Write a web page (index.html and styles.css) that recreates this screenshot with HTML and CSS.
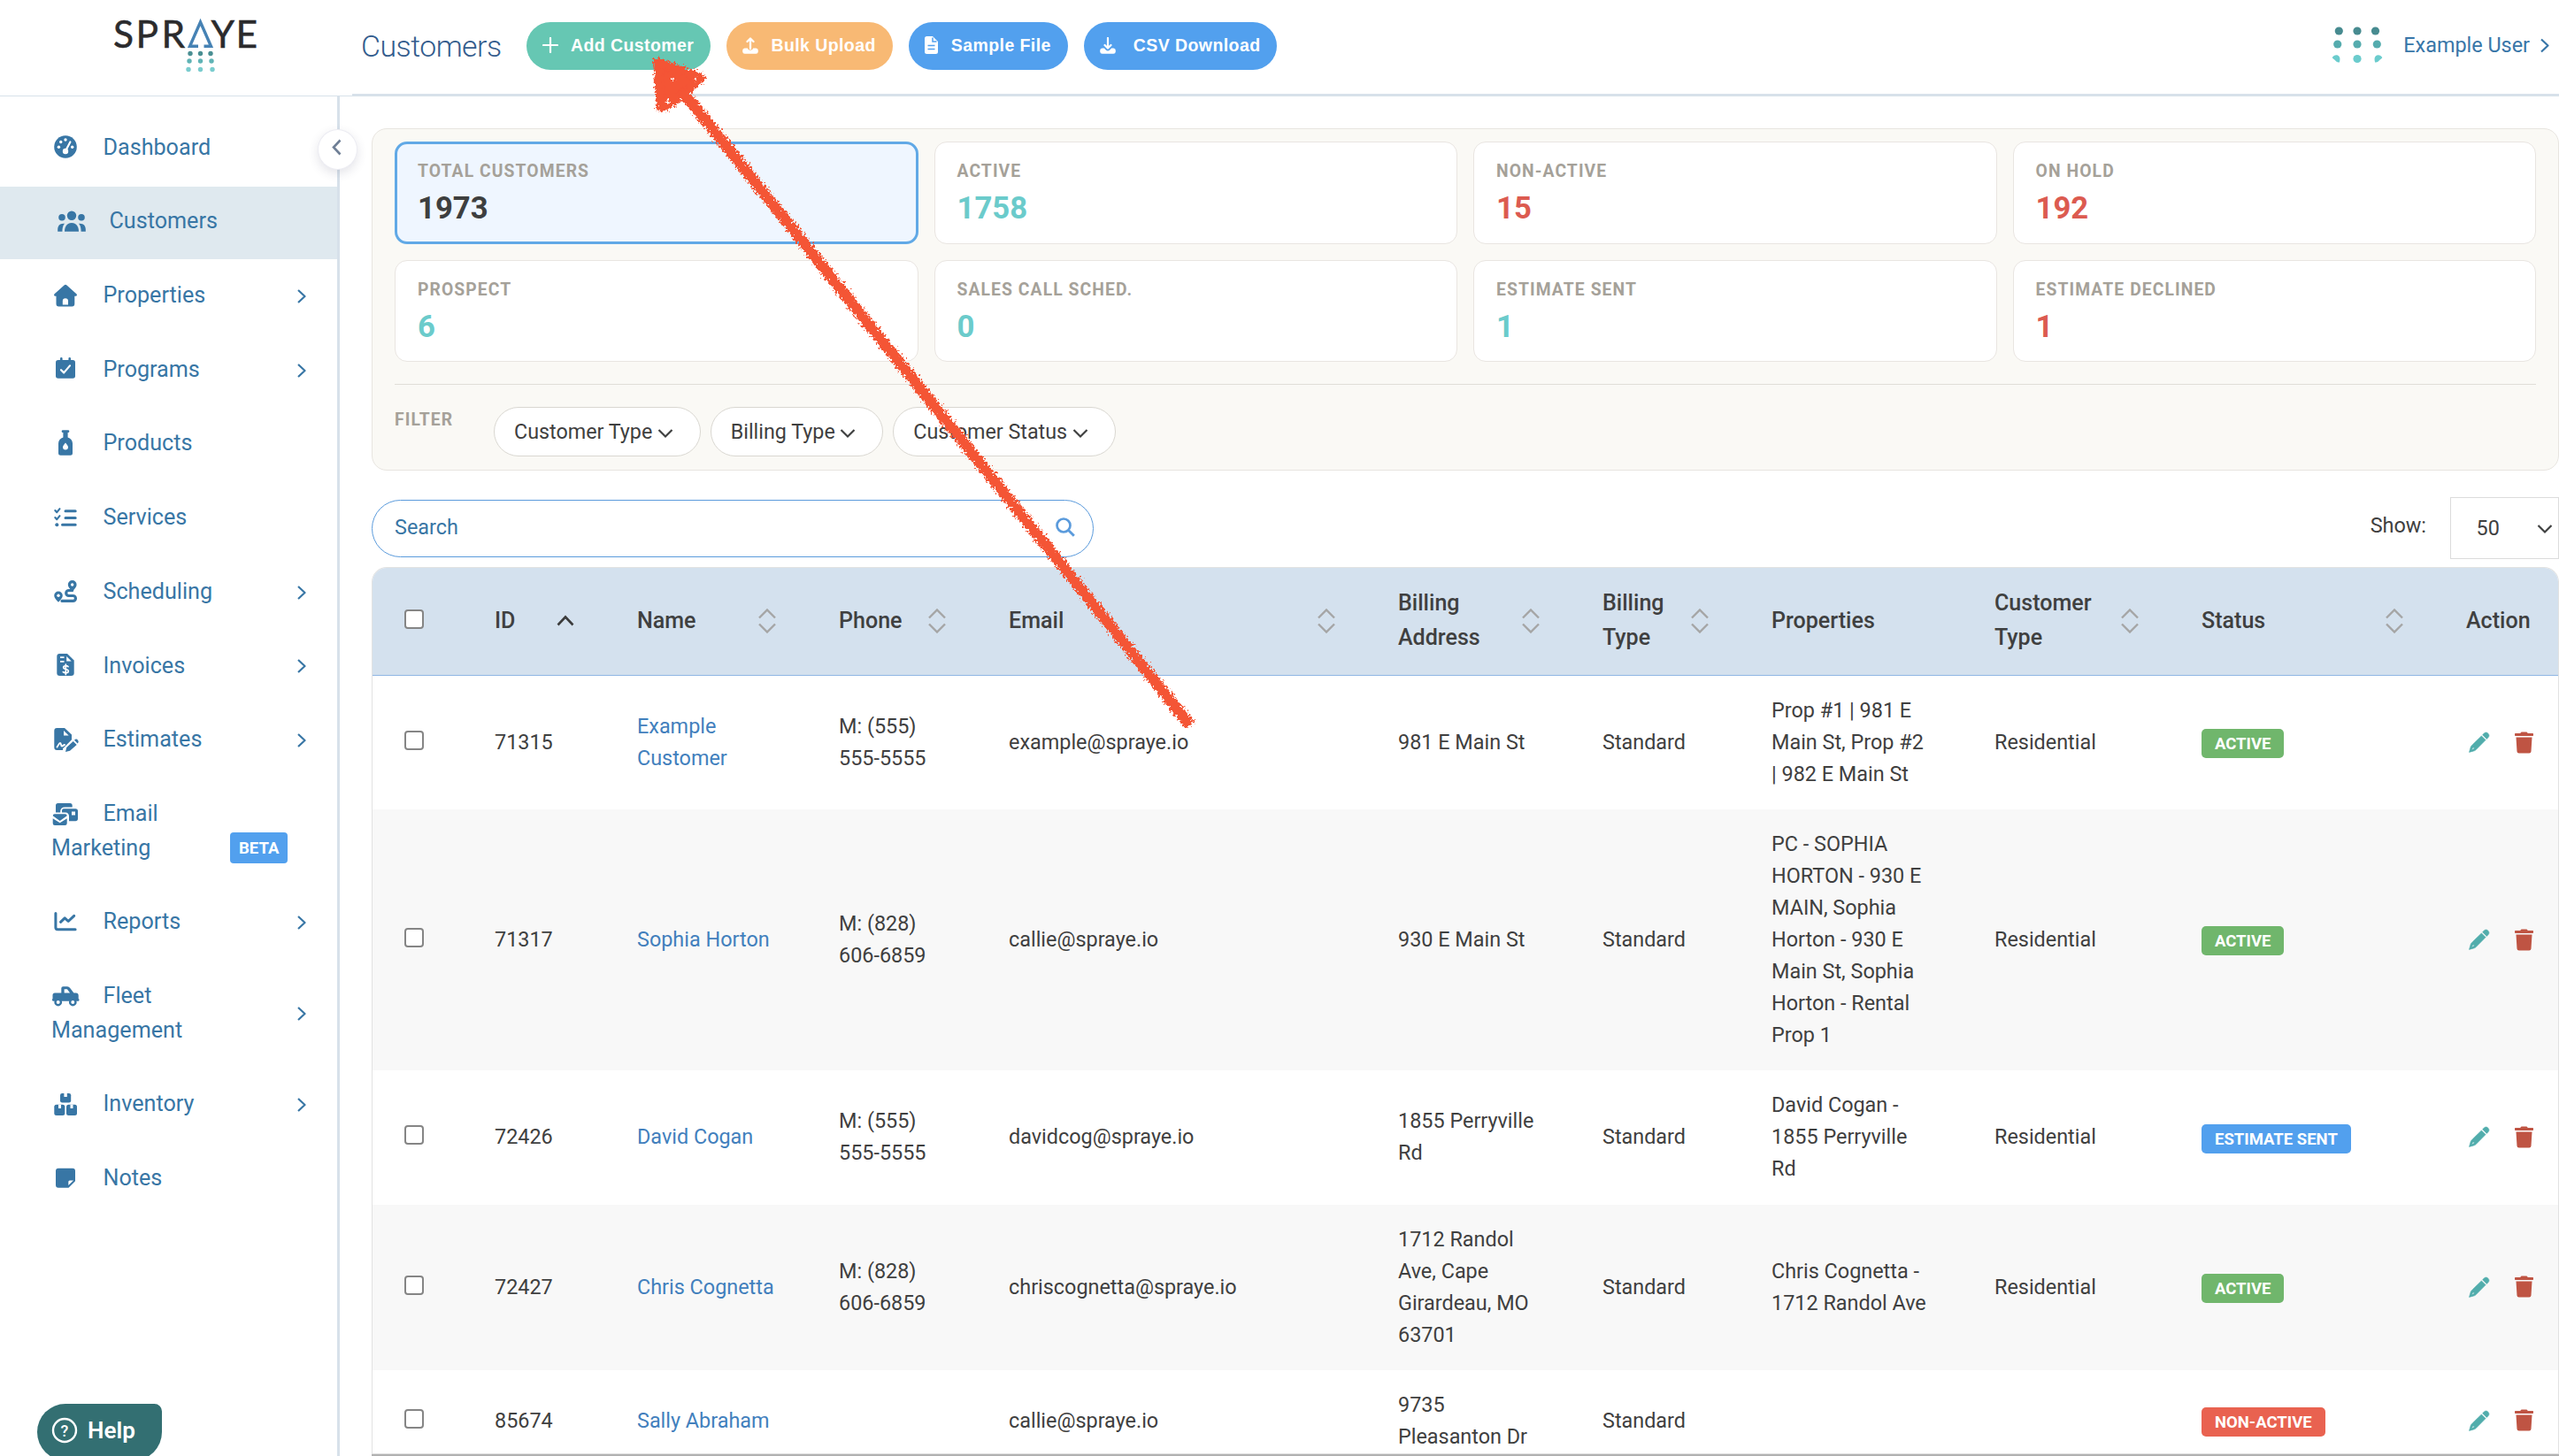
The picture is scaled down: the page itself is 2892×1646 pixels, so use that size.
FILE: index.html
```html
<!DOCTYPE html>
<html lang="en">
<head>
  <meta charset="UTF-8">
  <meta name="viewport" content="width=device-width, initial-scale=1.0">
  <title>Customers</title>
  <link rel="stylesheet" href="styles.css">
</head>
<body>
  <!-- icon sprite -->
  <svg class="sprite" width="0" height="0">
    <symbol id="i-gauge" viewBox="0 0 34 34"><circle cx="17" cy="17" r="12.8"/><g fill="#fff"><circle cx="9.4" cy="17.3" r="1.7"/><circle cx="11.7" cy="11.5" r="1.7"/><circle cx="17" cy="9" r="1.7"/><circle cx="24.7" cy="17.3" r="1.7"/><circle cx="17" cy="22" r="3.2"/></g><path d="M22.4 11.4L17.4 21" stroke="#fff" stroke-width="2.2" stroke-linecap="round"/></symbol>
    <symbol id="i-users" viewBox="0 0 34 34"><circle cx="17" cy="10.8" r="5.2"/><circle cx="6" cy="12.8" r="3.8"/><circle cx="28" cy="12.8" r="3.8"/><path d="M9 28.8c0-6 3.2-9.9 8-9.9s8 3.9 8 9.9zM1.2 28.8v-2.5c0-4.4 2.8-6.9 7.8-6.5-1.9 2.2-2.6 5-2.6 9zM32.8 28.8v-2.5c0-4.4-2.8-6.9-7.8-6.5 1.9 2.2 2.6 5 2.6 9z"/></symbol>
    <symbol id="i-house" viewBox="0 0 34 34"><path d="M15.8 5.3a1.8 1.8 0 0 1 2.4 0l11.2 10c1 1 .5 2.5-.8 2.5h-1.3v8.7a3 3 0 0 1-3 3H9.5a3 3 0 0 1-3-3v-8.7H5.4c-1.3 0-1.8-1.5-.8-2.5z"/><path d="M13.8 27.5v-4.2a3.1 3.1 0 0 1 6.2 0v4.2z" fill="#fff"/></symbol>
    <symbol id="i-calendar" viewBox="0 0 34 34"><rect x="6" y="7" width="22" height="20.8" rx="2.8"/><path d="M12.3 5.2v4M21.7 5.2v4" stroke="currentColor" stroke-width="2.6" stroke-linecap="round"/><path d="M12 18.2l3.2 3.2 6.8-8" fill="none" stroke="#fff" stroke-width="2.2" stroke-linecap="round" stroke-linejoin="round"/></symbol>
    <symbol id="i-bottle" viewBox="0 0 34 34"><path d="M14 2.3h6a1.3 1.3 0 0 1 0 2.7h-.4v5.5c3.2 1 5.4 3.6 5.4 6.8v11a2.5 2.5 0 0 1-2.5 2.5h-11A2.5 2.5 0 0 1 9 28.3v-11c0-3.2 2.2-5.8 5.4-6.8V5H14a1.3 1.3 0 0 1 0-2.7z"/><path d="M17 16.5c1.6 2 3 3.6 3 5a3 3 0 0 1-6 0c0-1.4 1.4-3 3-5z" fill="#fff"/></symbol>
    <symbol id="i-tasks" viewBox="0 0 34 34"><g fill="none" stroke="currentColor" stroke-linecap="round" stroke-linejoin="round"><path d="M17 9.7h11.2M17 17.4h11.2M13.5 25.3h14.7" stroke-width="3"/><path d="M5.3 9l2 2.2 3.2-4M5.3 17l2 2.2 3.2-4" stroke-width="2.1"/></g><circle cx="7.3" cy="25.3" r="2"/></symbol>
    <symbol id="i-route" viewBox="0 0 34 34"><path d="M24.7 16.5h-4a3 3 0 0 0 0 6h4.8a2.9 2.9 0 0 1 0 5.9H13" fill="none" stroke="currentColor" stroke-width="3.2" stroke-linecap="round"/><path d="M24.7 5a4.9 4.9 0 0 1 4.9 4.9c0 2.3-2 4.8-4.9 7.6-2.9-2.8-4.9-5.3-4.9-7.6A4.9 4.9 0 0 1 24.7 5zM9 17.5a4.8 4.8 0 0 1 4.8 4.8c0 2.3-2 4.7-4.8 7.5-2.8-2.8-4.8-5.2-4.8-7.5A4.8 4.8 0 0 1 9 17.5z"/><circle cx="24.7" cy="10" r="1.7" fill="#fff"/><circle cx="9" cy="22.3" r="1.7" fill="#fff"/></symbol>
    <symbol id="i-invoice" viewBox="0 0 34 34"><path d="M10.3 4H19l7.7 7.5V26a3 3 0 0 1-3 3H10.3a3 3 0 0 1-3-3V7a3 3 0 0 1 3-3z"/><path d="M18.2 7v5.5h5.5zM11 7.2h4.5v1.7H11zM11 12h4.5v1.7H11z" fill="#fff"/><path d="M20 18.6c-1.5-1.3-5.3-1.3-5.3.9 0 2.5 5.6 1.5 5.6 4.2 0 2.4-4.3 2.4-6 .9M17.3 16v11.5" fill="none" stroke="#fff" stroke-width="1.7" stroke-linecap="round"/></symbol>
    <symbol id="i-contract" viewBox="0 0 34 34"><path d="M7.3 4H16l8 7.5v5.7L14 27.2v1.7H7.3a3 3 0 0 1-3-3V7a3 3 0 0 1 3-3z"/><path d="M15 7v5.5h5.7z" fill="#fff"/><path d="M7.5 25.5c1.5-1.5 2-4.5 3.5-4.5s.5 3.5 2 3.5 1.500-1.500 3-1.500" fill="none" stroke="#fff" stroke-width="1.8" stroke-linecap="round"/><path d="M17 31l1.200-5 7.500-7 4 4-7.700 6.800zM27 17.700c1.300-1.500 3-1.400 4 0 1 1.200.9 2.600-.3 3.800z"/></symbol>
    <symbol id="i-mails" viewBox="0 0 34 34"><path d="M8.5 5h13.5a2.7 2.7 0 0 1 2.7 2.7v1.8h-8.5c-3 0-5 1.8-5 4.5v1.5H6V7.5A2.5 2.5 0 0 1 8.5 5z"/><path d="M15 11.3h13.3a2.7 2.7 0 0 1 2.7 2.7v8.6a2.7 2.7 0 0 1-2.7 2.7H21v-5.6c0-2.5-1.5-4.2-4-4.2h-4v-1.5c0-1.7.5-2.7 2-2.7z"/><path d="M24 14.5h4v4h-4z" fill="#fff"/><path d="M4.7 17.3h12a2 2 0 0 1 2 2l-8 5.7-8-5.7a2 2 0 0 1 2-2zM2.7 22.3l8 5 8-5v5.4a2.3 2.3 0 0 1-2.3 2.3H5a2.3 2.3 0 0 1-2.3-2.3z"/></symbol>
    <symbol id="i-chart" viewBox="0 0 34 34"><path d="M5.9 7.5V23.5a2.2 2.2 0 0 0 2.2 2.2h20M11.5 17.3l4.7-4.5 4 3.7 6.5-6.2" fill="none" stroke="currentColor" stroke-width="3" stroke-linecap="round" stroke-linejoin="round"/></symbol>
    <symbol id="i-truck" viewBox="0 0 34 34"><path d="M14.3 6.3H19a4 4 0 0 1 3.2 1.6l4.2 5.7h2.3a3 3 0 0 1 3 3v3.5a1.5 1.5 0 0 1 0 2.7H3a1.5 1.5 0 0 1-.5-2.7v-4a2.5 2.5 0 0 1 2.5-2.5h7.3V8.3a2 2 0 0 1 2-2z"/><path d="M15.6 9.3h3.3l3.2 4.3h-6.5z" fill="#fff"/><circle cx="8.7" cy="24" r="3.2" fill="#fff" stroke="currentColor" stroke-width="2.4"/><circle cx="25.3" cy="24" r="3.2" fill="#fff" stroke="currentColor" stroke-width="2.4"/></symbol>
    <symbol id="i-boxes" viewBox="0 0 34 34"><rect x="11" y="5" width="12.2" height="10.4" rx="2.2"/><rect x="4.3" y="17.7" width="12" height="12.4" rx="2.5"/><rect x="18" y="17.7" width="12" height="12.4" rx="2.5"/><path d="M15.4 5h3.4v4h-3.4zM9 17.7h3v4.2H9zM22.5 17.7h3v4.2h-3z" fill="#fff"/></symbol>
    <symbol id="i-note" viewBox="0 0 34 34"><path d="M9 5.7h16a3 3 0 0 1 3 3v11.5l-7.5 7.5H9a3 3 0 0 1-3-3v-16a3 3 0 0 1 3-3z"/><path d="M20.3 25v-4a1.5 1.5 0 0 1 1.5-1.5H26z" fill="#fff"/></symbol>
    <symbol id="i-right" viewBox="0 0 10 16"><path d="M1 1l7.5 7L1 15" fill="none" stroke="currentColor" stroke-width="2.2" stroke-linejoin="round"/></symbol>
    <symbol id="i-down" viewBox="0 0 18 12"><path d="M1.5 2L9 9.5 16.5 2" fill="none" stroke="currentColor" stroke-width="2.2"/></symbol>
    <symbol id="i-sort" viewBox="0 0 20 28"><path d="M1 10.5L10 1.5l9 9M1 17.5l9 9 9-9" fill="none" stroke="#a5a5a5" stroke-width="2.4"/></symbol>
    <symbol id="i-pencil" viewBox="0 0 24 24"><path d="M17.3 2.1c1.5-1.5 3.2-1.3 4.6.1 1.3 1.4 1.5 3 .1 4.5l-1.7 1.7-4.7-4.7zM14.4 4.9l4.7 4.7L8 20.8c-.5.5-1 .8-1.7 1L.5 23.4l1.7-5.8c.2-.7.5-1.2 1-1.7zM4.6 18.2l-1.2 2.4 2.3-.8.6-1.8z" fill-rule="evenodd" stroke="currentColor" stroke-width=".6"/></symbol>
    <symbol id="i-trash" viewBox="0 0 448 512"><path d="M432 32H312l-9.4-18.7A24 24 0 0 0 281.1 0H166.8a23.72 23.72 0 0 0-21.4 13.3L136 32H16A16 16 0 0 0 0 48v32a16 16 0 0 0 16 16h416a16 16 0 0 0 16-16V48a16 16 0 0 0-16-16zM53.2 467a48 48 0 0 0 47.9 45h245.8a48 48 0 0 0 47.9-45L416 128H32z"/></symbol>
  </svg>

  <header class="topbar">
    <div class="brand">
      <svg class="logo" viewBox="0 0 164 62" width="164" height="62">
        <g class="logo-text"><text x="-1" y="32">S</text><text x="24.5" y="32">P</text><text x="53.5" y="32">R</text><text x="109.5" y="32">Y</text><text x="137.5" y="32">E</text></g>
        <path d="M95 30.3H85.5L97.5 3l12 27.3H101.5" fill="none" stroke="#4682b4" stroke-width="3.4"/>
        <g fill="#4a8f93"><circle cx="86" cy="38.5" r="2.7"/><circle cx="97.5" cy="38.5" r="2.7"/><circle cx="109" cy="38.5" r="2.7"/></g>
        <g fill="#5fb3b5"><circle cx="85" cy="47" r="2.7"/><circle cx="97.5" cy="47" r="2.7"/><circle cx="110" cy="47" r="2.7"/></g>
        <g fill="#7accce"><circle cx="84" cy="56.5" r="2.7"/><circle cx="97.5" cy="56.5" r="2.7"/><circle cx="111" cy="56.5" r="2.7"/></g>
      </svg>
    </div>
    <div class="topbar-main">
      <h1 class="page-title">Customers</h1>
      <div class="actions">
        <button class="btn btn-green"><svg width="18" height="18" viewBox="0 0 18 18"><path d="M9 1v16M1 9h16" stroke="#fff" stroke-width="2.2" stroke-linecap="round"/></svg>Add Customer</button>
        <button class="btn btn-orange"><svg width="18" height="19" viewBox="0 0 18 19"><path d="M9 13V2M5.5 5L9 1.5 12.5 5" fill="none" stroke="#fff" stroke-width="2.3" stroke-linecap="round" stroke-linejoin="round"/><path d="M2.5 12.5H6c.5 3 5.5 3 6 0h3.5a2.5 2.5 0 0 1 2.3 2.5v1.5a2.5 2.5 0 0 1-2.5 2.3H2.7A2.5 2.5 0 0 1 .2 16.5V15a2.5 2.5 0 0 1 2.3-2.5z" fill="#fff"/></svg>Bulk Upload</button>
        <button class="btn btn-blue btn-sample"><svg width="15" height="20" viewBox="0 0 15 20"><path d="M2.5 0H9l6 6v11.5a2.5 2.5 0 0 1-2.5 2.5h-10A2.5 2.5 0 0 1 0 17.5v-15A2.5 2.5 0 0 1 2.5 0z" fill="#fff"/><path d="M9 1.5V6h4.5M3.5 10.5h8M3.5 14.5h8" fill="none" stroke="#52a0ee" stroke-width="1.5"/></svg>Sample File</button>
        <button class="btn btn-blue btn-csv"><svg width="18" height="19" viewBox="0 0 18 19"><path d="M2.5 12.5H5c1 1.5 2.5 3 4 3s3-1.5 4-3h2.5a2.5 2.5 0 0 1 2.3 2.5v1.5a2.5 2.5 0 0 1-2.5 2.3H2.7A2.5 2.5 0 0 1 .2 16.5V15a2.5 2.5 0 0 1 2.3-2.5z" fill="#fff"/><path d="M9 1v11M5.5 9L9 12.5 12.5 9" fill="none" stroke="#fff" stroke-width="2.2" stroke-linecap="round" stroke-linejoin="round"/></svg>CSV Download</button>
      </div>
      <div class="user">
        <svg class="apps" width="58" height="42" viewBox="0 0 58 42">
          <g fill="#478b90"><circle cx="8.3" cy="5" r="4.6"/><circle cx="29" cy="5" r="4.6"/><circle cx="49.5" cy="5" r="4.6"/></g>
          <g fill="#55acae"><circle cx="6.7" cy="20" r="4.6"/><circle cx="29" cy="20" r="4.6"/><circle cx="51.3" cy="20" r="4.6"/></g>
          <g fill="#6bcccd"><path d="M.7 35c1.5-3 5.5-3.8 7.6-1.6 1.6 1.7 1.3 4.2.6 7-1.9.5-3.4-.5-4.6-1.9C3 37 1.4 36.7.7 35z"/><circle cx="29" cy="36.5" r="4.6"/><path d="M57.3 35c-1.5-3-5.5-3.8-7.6-1.6-1.6 1.7-1.3 4.2-.6 7 1.9.5 3.4-.5 4.6-1.9 1.3-1.5 2.9-1.8 3.6-3.5z"/></g>
        </svg>
        <span>Example User</span>
        <svg class="chev" width="10" height="17"><use href="#i-right"/></svg>
      </div>
    </div>
  </header>

  <div class="layout">
    <nav class="sidebar">
      <a class="nav-item"><span class="nav-label"><svg class="ico"><use href="#i-gauge"/></svg>Dashboard</span></a>
      <a class="nav-item active"><span class="nav-label"><svg class="ico"><use href="#i-users"/></svg>Customers</span></a>
      <a class="nav-item"><span class="nav-label"><svg class="ico"><use href="#i-house"/></svg>Properties</span><svg class="chev"><use href="#i-right"/></svg></a>
      <a class="nav-item"><span class="nav-label"><svg class="ico"><use href="#i-calendar"/></svg>Programs</span><svg class="chev"><use href="#i-right"/></svg></a>
      <a class="nav-item"><span class="nav-label"><svg class="ico"><use href="#i-bottle"/></svg>Products</span></a>
      <a class="nav-item"><span class="nav-label"><svg class="ico"><use href="#i-tasks"/></svg>Services</span></a>
      <a class="nav-item"><span class="nav-label"><svg class="ico"><use href="#i-route"/></svg>Scheduling</span><svg class="chev"><use href="#i-right"/></svg></a>
      <a class="nav-item"><span class="nav-label"><svg class="ico"><use href="#i-invoice"/></svg>Invoices</span><svg class="chev"><use href="#i-right"/></svg></a>
      <a class="nav-item"><span class="nav-label"><svg class="ico"><use href="#i-contract"/></svg>Estimates</span><svg class="chev"><use href="#i-right"/></svg></a>
      <a class="nav-item nav-email"><span class="nav-label"><svg class="ico"><use href="#i-mails"/></svg>Email Marketing</span><span class="beta">BETA</span></a>
      <a class="nav-item"><span class="nav-label"><svg class="ico"><use href="#i-chart"/></svg>Reports</span><svg class="chev"><use href="#i-right"/></svg></a>
      <a class="nav-item"><span class="nav-label"><svg class="ico"><use href="#i-truck"/></svg>Fleet Management</span><svg class="chev"><use href="#i-right"/></svg></a>
      <a class="nav-item"><span class="nav-label"><svg class="ico"><use href="#i-boxes"/></svg>Inventory</span><svg class="chev"><use href="#i-right"/></svg></a>
      <a class="nav-item"><span class="nav-label"><svg class="ico"><use href="#i-note"/></svg>Notes</span></a>
      <button class="collapse"><svg width="11" height="19" viewBox="0 0 11 19"><path d="M9.5 1.5L2 9.5l7.5 8" fill="none" stroke="#6f7f96" stroke-width="2.6"/></svg></button>
    </nav>

    <main class="content">
      <section class="panel">
        <div class="stats">
          <div class="stat selected"><div class="stat-label">TOTAL CUSTOMERS</div><div class="stat-value">1973</div></div>
          <div class="stat"><div class="stat-label">ACTIVE</div><div class="stat-value teal">1758</div></div>
          <div class="stat"><div class="stat-label">NON-ACTIVE</div><div class="stat-value red">15</div></div>
          <div class="stat"><div class="stat-label">ON HOLD</div><div class="stat-value red">192</div></div>
          <div class="stat"><div class="stat-label">PROSPECT</div><div class="stat-value teal">6</div></div>
          <div class="stat"><div class="stat-label">SALES CALL SCHED.</div><div class="stat-value teal">0</div></div>
          <div class="stat"><div class="stat-label">ESTIMATE SENT</div><div class="stat-value teal">1</div></div>
          <div class="stat"><div class="stat-label">ESTIMATE DECLINED</div><div class="stat-value red">1</div></div>
        </div>
        <div class="filters">
          <span class="filter-label">FILTER</span>
          <button class="pill">Customer Type<svg width="18" height="12"><use href="#i-down"/></svg></button>
          <button class="pill">Billing Type<svg width="18" height="12"><use href="#i-down"/></svg></button>
          <button class="pill">Customer Status<svg width="18" height="12"><use href="#i-down"/></svg></button>
        </div>
      </section>

      <div class="tools">
        <div class="search"><span>Search</span><svg width="22" height="22" viewBox="0 0 22 22"><circle cx="9" cy="9" r="7.5" fill="none" stroke="#5b9bdc" stroke-width="2.7"/><path d="M14.5 14.5l6.3 6.3" stroke="#5b9bdc" stroke-width="2.9"/></svg></div>
        <div class="show"><span>Show:</span><div class="select"><span>50</span><svg width="18" height="12"><use href="#i-down"/></svg></div></div>
      </div>

      <div class="table-wrap">
        <table class="customers">
          <colgroup>
            <col class="c-check"><col class="c-id"><col class="c-name"><col class="c-phone"><col class="c-email"><col class="c-addr"><col class="c-btype"><col class="c-props"><col class="c-ctype"><col class="c-status"><col class="c-action">
          </colgroup>
          <thead>
            <tr>
              <th><span class="check"></span></th>
              <th><div class="th">ID<svg width="20" height="28" viewBox="0 0 20 28"><path d="M1.5 18.5l8.5-9 8.5 9" fill="none" stroke="#3c3c3c" stroke-width="2.6"/></svg></div></th>
              <th><div class="th">Name<svg width="20" height="28"><use href="#i-sort"/></svg></div></th>
              <th><div class="th">Phone<svg width="20" height="28"><use href="#i-sort"/></svg></div></th>
              <th><div class="th">Email<svg width="20" height="28"><use href="#i-sort"/></svg></div></th>
              <th><div class="th"><span>Billing<br>Address</span><svg width="20" height="28"><use href="#i-sort"/></svg></div></th>
              <th><div class="th"><span>Billing<br>Type</span><svg width="20" height="28"><use href="#i-sort"/></svg></div></th>
              <th>Properties</th>
              <th><div class="th"><span>Customer<br>Type</span><svg width="20" height="28"><use href="#i-sort"/></svg></div></th>
              <th><div class="th">Status<svg width="20" height="28"><use href="#i-sort"/></svg></div></th>
              <th>Action</th>
            </tr>
          </thead>
          <tbody>
            <tr>
              <td><span class="check"></span></td><td>71315</td><td><a>Example Customer</a></td><td>M: (555) 555-5555</td><td>example@spraye.io</td><td>981 E Main St</td><td>Standard</td>
              <td>Prop #1 | 981 E Main St, Prop #2 | 982 E Main St</td><td>Residential</td><td><span class="badge green">ACTIVE</span></td>
              <td><div class="row-actions"><svg class="edit"><use href="#i-pencil"/></svg><svg class="trash"><use href="#i-trash"/></svg></div></td>
            </tr>
            <tr>
              <td><span class="check"></span></td><td>71317</td><td><a>Sophia Horton</a></td><td>M: (828) 606-6859</td><td>callie@spraye.io</td><td>930 E Main St</td><td>Standard</td>
              <td>PC - SOPHIA HORTON - 930 E MAIN, Sophia Horton - 930 E Main St, Sophia Horton - Rental Prop 1</td><td>Residential</td><td><span class="badge green">ACTIVE</span></td>
              <td><div class="row-actions"><svg class="edit"><use href="#i-pencil"/></svg><svg class="trash"><use href="#i-trash"/></svg></div></td>
            </tr>
            <tr>
              <td><span class="check"></span></td><td>72426</td><td><a>David Cogan</a></td><td>M: (555) 555-5555</td><td>davidcog@spraye.io</td><td>1855 Perryville Rd</td><td>Standard</td>
              <td>David Cogan - 1855 Perryville Rd</td><td>Residential</td><td><span class="badge blue">ESTIMATE SENT</span></td>
              <td><div class="row-actions"><svg class="edit"><use href="#i-pencil"/></svg><svg class="trash"><use href="#i-trash"/></svg></div></td>
            </tr>
            <tr>
              <td><span class="check"></span></td><td>72427</td><td class="name"><a>Chris Cognetta</a></td><td>M: (828) 606-6859</td><td>chriscognetta@spraye.io</td><td>1712 Randol Ave, Cape Girardeau, MO 63701</td><td>Standard</td>
              <td>Chris Cognetta - 1712 Randol Ave</td><td>Residential</td><td><span class="badge green">ACTIVE</span></td>
              <td><div class="row-actions"><svg class="edit"><use href="#i-pencil"/></svg><svg class="trash"><use href="#i-trash"/></svg></div></td>
            </tr>
            <tr>
              <td><span class="check"></span></td><td>85674</td><td><a>Sally Abraham</a></td><td></td><td>callie@spraye.io</td><td>9735 Pleasanton Dr</td><td>Standard</td>
              <td></td><td></td><td><span class="badge red">NON-ACTIVE</span></td>
              <td><div class="row-actions"><svg class="edit"><use href="#i-pencil"/></svg><svg class="trash"><use href="#i-trash"/></svg></div></td>
            </tr>
          </tbody>
        </table>
      </div>
    </main>
  </div>

  <div class="scrollbar"></div>

  <button class="help"><svg width="30" height="30" viewBox="0 0 30 30"><circle cx="15" cy="15" r="13" fill="none" stroke="#fff" stroke-width="2.4"/><text x="15" y="21.5" font-size="18" text-anchor="middle" class="help-mark">?</text></svg>Help</button>

  <!-- crayon pointer to the Add Customer button -->
  <svg class="pointer" viewBox="0 0 660 800" width="660" height="800">
    <filter id="crayon" x="-5%" y="-5%" width="110%" height="110%">
      <feTurbulence type="fractalNoise" baseFrequency="0.4" numOctaves="3" seed="4"/>
      <feDisplacementMap in="SourceGraphic" scale="11" xChannelSelector="R" yChannelSelector="G"/>
    </filter>
    <g filter="url(#crayon)" fill="#f45436" stroke="#f45436" stroke-linejoin="round">
      <path d="M39 47l49 18-18 17-22 15-5 1z" stroke-width="10"/>
      <path d="M67 80L641 797" stroke-width="12.5" stroke-linecap="butt"/>
      <path d="M55 65l1 4M50 93l2-3M84 66l-3 1" stroke="#fff" stroke-width="2.5"/>
    </g>
  </svg>
</body>
</html>
```
FILE: styles.css
```css
* {
  box-sizing: border-box;
}

body {
  margin: 0;
  width: 2892px;
  height: 1646px;
  overflow: hidden;
  background: #fff;
  color: #3f4040;
  font-family: Roboto, "Liberation Sans", sans-serif;
  font-size: 23.4px;
}

button {
  font-family: inherit;
  border: none;
  cursor: pointer;
}

svg {
  flex-shrink: 0;
  fill: currentColor;
}

.sprite {
  display: block;
  height: 0;
}

/* top bar */
.topbar {
  display: flex;
  height: 109px;
}

.brand {
  width: 398px;
  padding: 22px 0 0 129px;
  border-bottom: 1px solid #d7e1ea;
}

.logo {
  display: block;
  overflow: visible;
}

.logo-text {
  font-family: Lato, sans-serif;
  font-size: 42.5px;
  font-weight: 400;
  fill: #2b2b2d;
  stroke: #2b2b2d;
  stroke-width: 0.5px;
}

.topbar-main {
  flex: 1;
  display: flex;
  align-items: flex-start;
  border-bottom: 3px solid #d7e1ea;
}

.page-title {
  margin: 0;
  padding: 32px 0 0 10px;
  width: 197px;
  font-size: 33.8px;
  line-height: 42px;
  font-weight: 300;
  letter-spacing: -0.5px;
  color: #335c8d;
}

.actions {
  display: flex;
  gap: 18px;
  padding-top: 25px;
}

.btn {
  display: flex;
  align-items: center;
  height: 54px;
  padding: 0 19px 2px 18px;
  border-radius: 27px;
  color: #fff;
  font-family: "Liberation Sans", Arial, sans-serif;
  font-size: 19.5px;
  font-weight: 700;
  letter-spacing: 0.42px;
  white-space: nowrap;
}

.btn svg {
  margin-right: 14px;
}

.btn-sample svg {
  margin-right: 15px;
}

.btn-csv svg {
  margin-right: 20px;
}

.btn-green { background: #66c7b3; }
.btn-orange { background: #f8b974; }
.btn-blue { background: #52a0ee; }

.user {
  display: flex;
  align-items: center;
  margin-left: auto;
  padding: 30px 11px 0 0;
  color: #3876a8;
}

.user .apps {
  margin-right: 23px;
}

.user .chev {
  margin-left: 12px;
}

/* sidebar */
.layout {
  display: flex;
  height: 1537px;
}

.sidebar {
  position: relative;
  width: 384px;
  padding-top: 17px;
  border-right: 3px solid #d7e1ea;
  color: #3876a5;
  font-size: 25.15px;
  line-height: 38.57px;
}

.nav-item {
  display: flex;
  align-items: center;
  margin-top: 1.77px;
  padding: 19.8px 35px 23.6px 58px;
}

.nav-item.active {
  padding-left: 65px;
  background: #dfe9ef;
}

.nav-label {
  width: 210px;
}

.nav-label .ico {
  width: 34px;
  height: 34px;
  margin: -10px 25.5px -7px -1px;
  vertical-align: -1.5px;
}

.nav-item .chev {
  width: 10px;
  height: 16px;
  margin: 1px 0 0 auto;
}

.nav-email {
  align-items: flex-end;
}

.beta {
  margin: 0 0 2px -8px;
  height: 35px;
  padding: 0 10px;
  border-radius: 4px;
  background: #52a0ee;
  color: #fff;
  font-size: 18.5px;
  line-height: 36px;
  font-weight: 700;
}

.collapse {
  position: absolute;
  top: 37px;
  right: -23px;
  width: 45px;
  height: 46px;
  padding: 0 3px 2px 0;
  border: 1px solid #ececf2;
  border-radius: 50%;
  background: #fff;
  box-shadow: 0 4px 12px rgba(60, 60, 90, 0.14);
}

/* stats + filters */
.content {
  flex: 1;
  padding: 36px 0 0 36px;
}

.panel {
  height: 387px;
  padding: 14px 25px 0;
  border: 1px solid #e8e5e0;
  border-radius: 17px;
  background: #faf9f5;
}

.stats {
  display: grid;
  grid-template-columns: repeat(4, 1fr);
  grid-template-rows: 116px 115px;
  gap: 18px;
}

.stat {
  padding: 22px 25px 0;
  border: 1px solid #e9e5e1;
  border-radius: 14px;
  background: #fff;
}

.stat.selected {
  padding: 20px 23px 0;
  border: 3px solid #61a9e6;
  background: #eff6ff;
}

.stat-label,
.filter-label {
  font-size: 19.3px;
  line-height: 22px;
  font-weight: 700;
  letter-spacing: 1.1px;
  color: #a5a199;
}

.stat-value {
  margin-top: 8.5px;
  font-size: 34.7px;
  line-height: 42px;
  font-weight: 700;
  color: #3e3f3f;
}

.stat-value.teal { color: #6bcbcb; }
.stat-value.red { color: #dc5b50; }

.filters {
  display: flex;
  margin-top: 25px;
  padding-top: 25px;
  border-top: 1px solid #e0ded8;
}

.filter-label {
  width: 112px;
  padding-top: 4px;
}

.pill {
  display: flex;
  align-items: center;
  height: 56px;
  margin-right: 11px;
  padding: 0 30px 1px 22px;
  border: 1px solid #d9d7d1;
  border-radius: 28px;
  background: #fff;
  color: #3f4040;
  font-size: 23.3px;
  white-space: nowrap;
}

.pill svg {
  margin: 5px 0 0 5.500px;
}

/* search row */
.tools {
  display: flex;
  justify-content: space-between;
  height: 109px;
  padding-top: 30px;
}

.search {
  display: flex;
  align-items: center;
  justify-content: space-between;
  width: 816px;
  height: 65px;
  margin-top: 3px;
  padding: 0 20px 3px 25px;
  border: 1.5px solid #5b9bdc;
  border-radius: 33px;
  color: #3876a5;
}

.show {
  display: flex;
  align-items: flex-start;
}

.show > span {
  padding: 18px 27px 0 0;
}

.select {
  display: flex;
  align-items: center;
  justify-content: space-between;
  width: 123px;
  height: 70px;
  padding: 0 6px 1px 28.5px;
  border: 1px solid #dcdcdc;
}

.select svg {
  margin-top: 3px;
}

/* table */
.table-wrap {
  border: 1px solid #e2e2e2;
  border-bottom: none;
  border-radius: 17px 17px 0 0;
  overflow: hidden;
}

.customers {
  width: 2470px;
  table-layout: fixed;
  border-collapse: separate;
  border-spacing: 0;
}

.c-check { width: 100px; }
.c-id { width: 161px; }
.c-name { width: 228px; }
.c-phone { width: 192px; }
.c-email { width: 440px; }
.c-addr { width: 231px; }
.c-btype { width: 191px; }
.c-props { width: 252px; }
.c-ctype { width: 234px; }
.c-status { width: 299px; }

.customers th {
  height: 122px;
  padding: 0 0 1px 38px;
  border-bottom: 1px solid #8fb6e4;
  background: #d4e1ee;
  font-size: 25.07px;
  line-height: 38.57px;
  font-weight: 500;
  text-align: left;
}

.th {
  display: flex;
  align-items: center;
  justify-content: space-between;
  padding-right: 33px;
}

.customers td {
  padding: 21px 34px 22.2px 38px;
  font-size: 23.4px;
  line-height: 36px;
  vertical-align: middle;
}

.customers td.name {
  padding-right: 20px;
}

.customers tbody tr:nth-child(even) {
  background: #f8f8f8;
}

.customers td a {
  color: #4280bd;
}

.customers th:first-child,
.customers td:first-child {
  padding-left: 36px;
  padding-right: 0;
}

.check {
  display: block;
  width: 22px;
  height: 22px;
  margin-top: -4px;
  border: 2px solid #858585;
  border-radius: 4px;
  background: #fff;
}

.badge {
  display: inline-block;
  height: 33px;
  padding: 0 15px;
  border-radius: 5px;
  color: #fff;
  font-size: 18.5px;
  line-height: 34px;
  font-weight: 700;
  vertical-align: middle;
  white-space: nowrap;
}

.badge.green { background: #70b66c; }
.badge.blue { background: #52a0ee; }
.badge.red { background: #e96250; }

.customers td:last-child {
  padding-right: 0;
}

.row-actions {
  display: flex;
  align-items: center;
  padding-left: 3px;
}

.edit {
  width: 24px;
  height: 24px;
  margin-right: 28px;
  color: #51adac;
}

.trash {
  width: 21px;
  height: 25px;
  color: #bf5443;
}

/* overlays */
.scrollbar {
  position: absolute;
  left: 420px;
  bottom: 0;
  width: 2472px;
  height: 3px;
  border-top: 1px solid #dedede;
  background: #b1b1b1;
}

.help {
  position: absolute;
  left: 42px;
  top: 1587px;
  display: flex;
  align-items: center;
  gap: 11px;
  width: 141px;
  height: 64px;
  padding: 0 0 4px 16px;
  border-radius: 34px 9px 34px 34px;
  background: #336f72;
  color: #fff;
  font-size: 26px;
  font-weight: 600;
}

.help-mark {
  fill: #fff;
  font-weight: 500;
}

.pointer {
  position: absolute;
  left: 704px;
  top: 23px;
  pointer-events: none;
}
```
